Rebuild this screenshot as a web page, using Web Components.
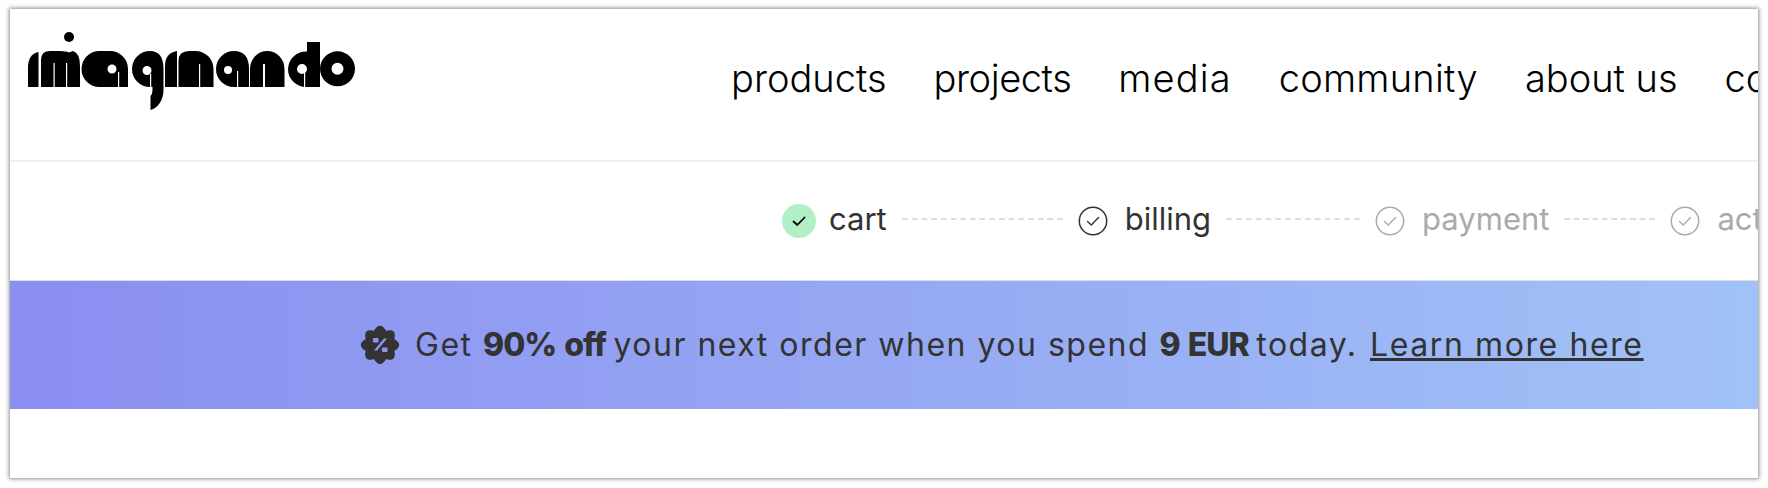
<!DOCTYPE html>
<html lang="en"><head><meta charset="utf-8"><title>imaginando checkout</title>
<style>
html,body{margin:0;height:100%;background:#fff;overflow:hidden}
body{padding:9px 10px 10px;box-sizing:border-box;font-family:Inter,"Liberation Sans",sans-serif}
</style></head><body>
<app-frame>
  <site-header>
    <nav-link>products</nav-link><nav-link style="letter-spacing:-.42px">projects</nav-link><nav-link style="letter-spacing:1.1px">media</nav-link><nav-link style="letter-spacing:.25px">community</nav-link><nav-link>about us</nav-link><nav-link>contact</nav-link>
  </site-header>
  <checkout-steps>
    <check-step state="done" line="161" label="cart"></check-step>
    <check-step state="current" line="134" label="billing"></check-step>
    <check-step state="todo" line="91" label="payment"></check-step>
    <check-step state="todo" label="activation"></check-step>
  </checkout-steps>
  <promo-banner>Get <b>90% off</b> your next order when you spend <b>9 EUR</b> today. <a href="#">Learn more here</a></promo-banner>
</app-frame>
<script>
function def(name,html,init){customElements.define(name,class extends HTMLElement{constructor(){super();this.attachShadow({mode:'open'}).innerHTML=html;}connectedCallback(){init&&init(this)}})}
def('app-frame',`<style>:host{display:block;width:1748px;height:469px;overflow:hidden;background:#fff;box-shadow:0 0 4px 1px rgba(0,0,0,.45)}</style><slot></slot>`);
def('imaginando-logo',`<style>:host{display:block;width:340px;height:85px}svg{display:block}</style>
<svg width="340" height="85" viewBox="20 30 340 85" role="img" aria-label="imaginando">
<g fill="#000" fill-rule="evenodd">
<circle cx="69" cy="37" r="5"/>
<path d="M28 87V68Q28 54 38.500 52V87Z"/>
<path d="M41 87V60Q41 51 50 51H60Q66 51 69 52.500Q72 51 73 51Q80 53 80 66V87Z"/>
<path d="M81.500 69A18 18 0 0 1 99.500 51H110A18 18 0 0 1 128 69V87H99.500A18 18 0 0 1 81.500 69ZM112 64.500A4.500 4.500 0 0 0 112 73.500A4.500 4.500 0 0 0 112 64.500Z"/>
<path d="M132 69A18 18 0 0 1 150 51Q163.500 51 163.500 69V90C163.500 100 158 108 150.500 110V96Q152.500 94 152.500 90V87H150A18 18 0 0 1 132 69ZM147 66A4.500 4.500 0 0 0 147 75A4.500 4.500 0 0 0 147 66Z"/>
<path d="M165 87V66Q165 53 177 51V87Z"/>
<path d="M178.500 87V61Q178.500 51 189 51H195A18 18 0 0 1 213.500 69V87Z"/>
<path d="M216 69A18 18 0 0 1 234 51Q249 51 249 69V87H234A18 18 0 0 1 216 69ZM228 66A4 4 0 0 0 228 74A4 4 0 0 0 228 66Z"/>
<path d="M250 87V69A17.250 18 0 0 1 284.500 69V87Z"/>
<path d="M288 69A18 18 0 0 1 307 51.500V42H320V87H307A18 18 0 0 1 288 69ZM302 64A5 5 0 0 0 302 74A5 5 0 0 0 302 64Z"/>
<path d="M320 68.800A17.500 17.500 0 1 1 355 68.800A17.500 17.500 0 1 1 320 68.800ZM331.500 68.800A6 6 0 1 0 343.500 68.800A6 6 0 1 0 331.500 68.800Z"/>
</g>
<g fill="#fff">
<rect x="53.500" y="63" width="1.200" height="24"/>
<rect x="66" y="63" width="1.200" height="24"/>
<rect x="118" y="72" width="1.200" height="15"/>
<rect x="150" y="74" width="1.200" height="13"/>
<rect x="199" y="64" width="1.200" height="23"/>
<rect x="237" y="71" width="1.200" height="16"/>
<rect x="263" y="64" width="2" height="23"/>
<rect x="304" y="72" width="1.200" height="15"/>
</g>
</svg>`);
def('site-header',`<style>:host{display:flex;align-items:flex-start;height:151px;border-bottom:2px solid #eee;box-sizing:content-box}
.logo{flex:none;margin:21px 0 0 10px}nav{display:flex;gap:47px;flex:none;margin:46px 0 0 371px;white-space:nowrap}</style>
<imaginando-logo class="logo"></imaginando-logo><nav><slot></slot></nav>`);
def('nav-link',`<style>:host{display:block;flex:none;font:340 38px/46px Inter,"Liberation Sans",sans-serif;color:#000}</style><slot></slot>`);
def('checkout-steps',`<style>:host{display:flex;align-items:center;height:118px;padding-left:772px;border-bottom:1px solid #ddd;white-space:nowrap}</style><slot></slot>`);
def('check-step',`<style>:host{display:flex;align-items:center;flex:none;font:400 31px/38px Inter,"Liberation Sans",sans-serif;color:#333}
:host([state=todo]){color:#aaa}
.ic{flex:none;width:34px;height:34px;display:block}
.t{margin:-4px 0 0 15px}
:host([state=done]) .t{margin-left:13px}
.line{flex:none;height:0;border-top:2px dashed #ddd;margin:-4px 13px 0 15px}
</style>
<svg class="ic" viewBox="0 0 34 34"></svg><span class="t"></span><span class="line"></span>`,el=>{
 const s=el.shadowRoot,st=el.getAttribute('state');
 s.querySelector('.t').textContent=el.getAttribute('label');
 const c=st==='done'?'#000':st==='current'?'#333':'#aaa';
 const circ=st==='done'?'<circle cx="17" cy="17" r="17" fill="#b0f0c4"/>':`<circle cx="17" cy="17" r="13.7" fill="none" stroke="${c}" stroke-width="1.5"/>`;
 s.querySelector('.ic').innerHTML=circ+`<path d="M11.500 17.500l3.800 3.500 7.200-7.500" fill="none" stroke="${c}" stroke-width="${st==='done'?1.8:1.4}" stroke-linecap="round" stroke-linejoin="round"/>`;
 const l=s.querySelector('.line'),w=el.getAttribute('line');
 if(w)l.style.width=w+'px';else l.remove();
});
def('promo-banner',`<style>:host{display:flex;align-items:center;height:128px;padding-left:350px;background:linear-gradient(90deg,#8b8ef0,#a1c2f7);color:#333;font:400 32px/38px Inter,"Liberation Sans",sans-serif;letter-spacing:1.5px;white-space:nowrap}
svg{flex:none;margin-right:15px}
::slotted(b){font-weight:800;letter-spacing:-1px;word-spacing:2px;margin-right:-3px}::slotted(a){color:#333;letter-spacing:1.6px;margin-left:2px}
</style><svg width="40" height="40" viewBox="-20 -20 40 40"><path id="b" fill="#333" stroke="#333" stroke-width="1.5" stroke-linejoin="round"/><g fill="#8f96f0"><path d="M-6 5.500L4 -6.500H7L-3 5.500Z"/><rect x="-7" y="-7" width="5.500" height="4.500" rx="1"/><rect x="2" y="2.500" width="5.500" height="4.500" rx="1"/></g></svg><span><slot></slot></span>`,el=>{
 const p=(r,deg)=>{const a=deg*Math.PI/180;return (r*Math.cos(a)).toFixed(2)+' '+(r*Math.sin(a)).toFixed(2)};
 let d='M'+p(14.5,-112.5);for(let i=0;i<8;i++){const t=-90+i*45;d+='Q'+p(23.5,t)+' '+p(14.5,t+22.5)}
 el.shadowRoot.querySelector('#b').setAttribute('d',d+'Z');
});
</script>
</body></html>
